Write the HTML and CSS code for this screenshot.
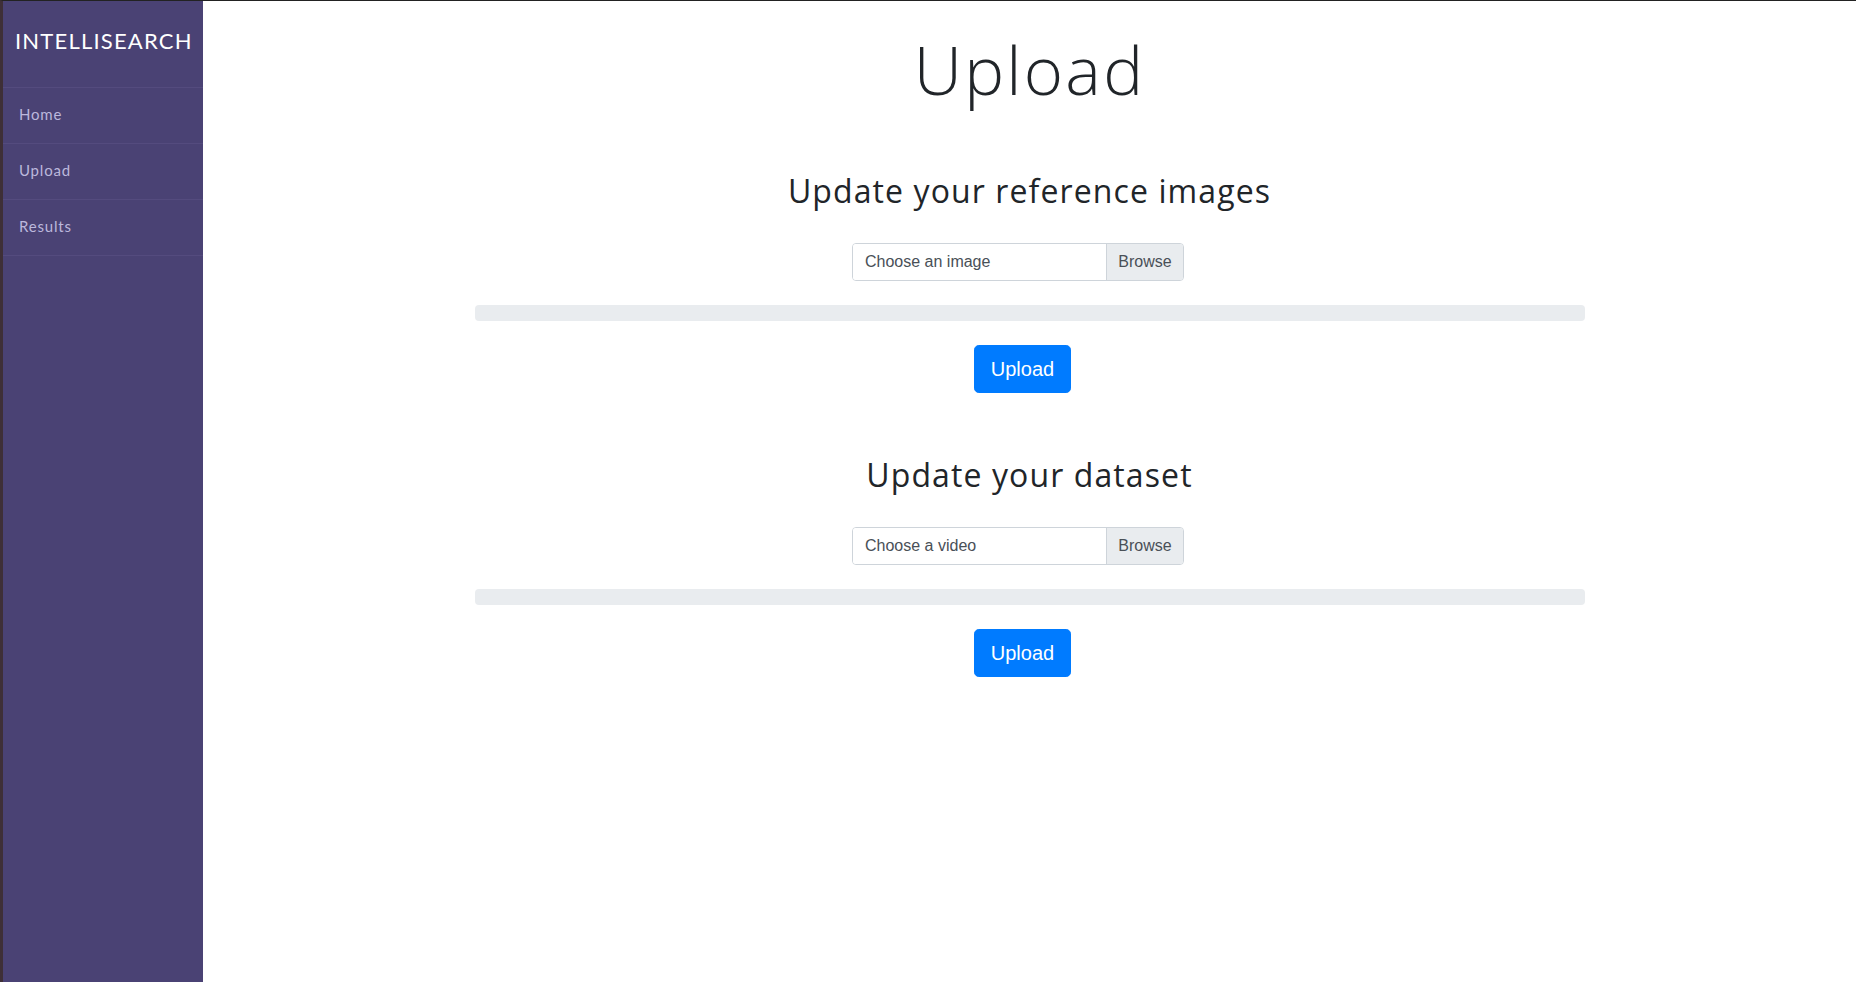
FILE: index.html
```html
<!DOCTYPE html>
<html lang="en">
<head>
    <meta charset="UTF-8">
    <meta name="viewport" content="width=device-width, initial-scale=1.0">
    <title>Upload - Intellisearch</title>
    <link rel="stylesheet" href="styles.css">
</head>
<body>
    <div class="wrapper">
        <nav class="sidebar">
            <div class="sidebar-header">
                <h3>INTELLISEARCH</h3>
            </div>
            <ul class="menu">
                <li><a href="#">Home</a></li>
                <li><a href="#">Upload</a></li>
                <li><a href="#">Results</a></li>
            </ul>
        </nav>
        <div class="content">
            <div class="container">
                <h1 class="title">Upload</h1>

                <h2 class="section-title">Update your reference images</h2>
                <div class="file-row">
                    <label class="custom-file">
                        <span class="file-label">Choose an image</span>
                        <span class="file-button">Browse</span>
                    </label>
                </div>
                <div class="progress"><div class="progress-bar" style="width: 0%"></div></div>
                <div class="btn-row">
                    <button class="btn-upload">Upload</button>
                </div>

                <h2 class="section-title">Update your dataset</h2>
                <div class="file-row">
                    <label class="custom-file">
                        <span class="file-label">Choose a video</span>
                        <span class="file-button">Browse</span>
                    </label>
                </div>
                <div class="progress"><div class="progress-bar" style="width: 0%"></div></div>
                <div class="btn-row">
                    <button class="btn-upload">Upload</button>
                </div>
            </div>
        </div>
    </div>
</body>
</html>
```

FILE: styles.css
```css
body {
    margin: 0;
    background-color: #fff;
    font-family: "Liberation Sans", Arial, sans-serif;
    color: #212529;
}
.wrapper {
    display: flex;
    min-height: 100vh;
    border-top: 1px solid #222;
    border-left: 3px solid #3e2f37;
    box-sizing: border-box;
}
.sidebar {
    width: 200px;
    flex-shrink: 0;
    background-color: #4a4274;
}
.sidebar-header {
    height: 86px;
    border-bottom: 1px solid #544b7e;
}
.sidebar-header h3 {
    margin: 0;
    padding: 27px 0 0 12px;
    font-family: Lato, sans-serif;
    font-weight: 400;
    font-size: 22px;
    line-height: 26px;
    letter-spacing: 1.2px;
    color: #fff;
}
.menu {
    list-style: none;
    margin: 0;
    padding: 0;
}
.menu li {
    height: 55px;
    border-bottom: 1px solid #544b7e;
}
.menu a {
    display: block;
    padding: 0 16px;
    line-height: 53px;
    font-family: Lato, sans-serif;
    font-size: 15px;
    letter-spacing: 0.8px;
    color: #bcb8dc;
    text-decoration: none;
}
.content {
    flex: 1;
}
.container {
    max-width: 1110px;
    margin: 0 auto;
    padding: 0 15px;
    text-align: center;
}
.title {
    margin: 28px 0 0;
    font-family: "Open Sans", sans-serif;
    font-weight: 300;
    font-size: 67px;
    line-height: 80px;
    letter-spacing: 2.3px;
}
.section-title {
    margin: 63px 0 0;
    font-family: "Open Sans", sans-serif;
    font-weight: 400;
    font-size: 32px;
    line-height: 38px;
    letter-spacing: 1.1px;
}
.file-row {
    display: flex;
    justify-content: center;
    margin-top: 33px;
}
.custom-file {
    display: flex;
    width: 332px;
    height: 38px;
    margin-right: 23px;
    border: 1px solid #ced4da;
    border-radius: 4px;
    box-sizing: border-box;
    overflow: hidden;
    font-size: 16px;
    color: #495057;
    cursor: pointer;
}
.file-label {
    flex: 1;
    padding: 0 12px;
    line-height: 36px;
    text-align: left;
    background-color: #fff;
}
.file-button {
    width: 76px;
    line-height: 36px;
    background-color: #e9ecef;
    border-left: 1px solid #ced4da;
}
.progress {
    height: 16px;
    margin-top: 24px;
    background-color: #e9ecef;
    border-radius: 4px;
    overflow: hidden;
}
.progress-bar {
    height: 100%;
    background-color: #007bff;
}
.btn-row {
    display: flex;
    justify-content: center;
    margin-top: 24px;
}
.btn-upload {
    margin-right: 14px;
    padding: 8px 16px;
    font-family: "Liberation Sans", Arial, sans-serif;
    font-size: 20px;
    line-height: 30px;
    color: #fff;
    background-color: #007bff;
    border: 1px solid #007bff;
    border-radius: 4.8px;
    cursor: pointer;
}
```
